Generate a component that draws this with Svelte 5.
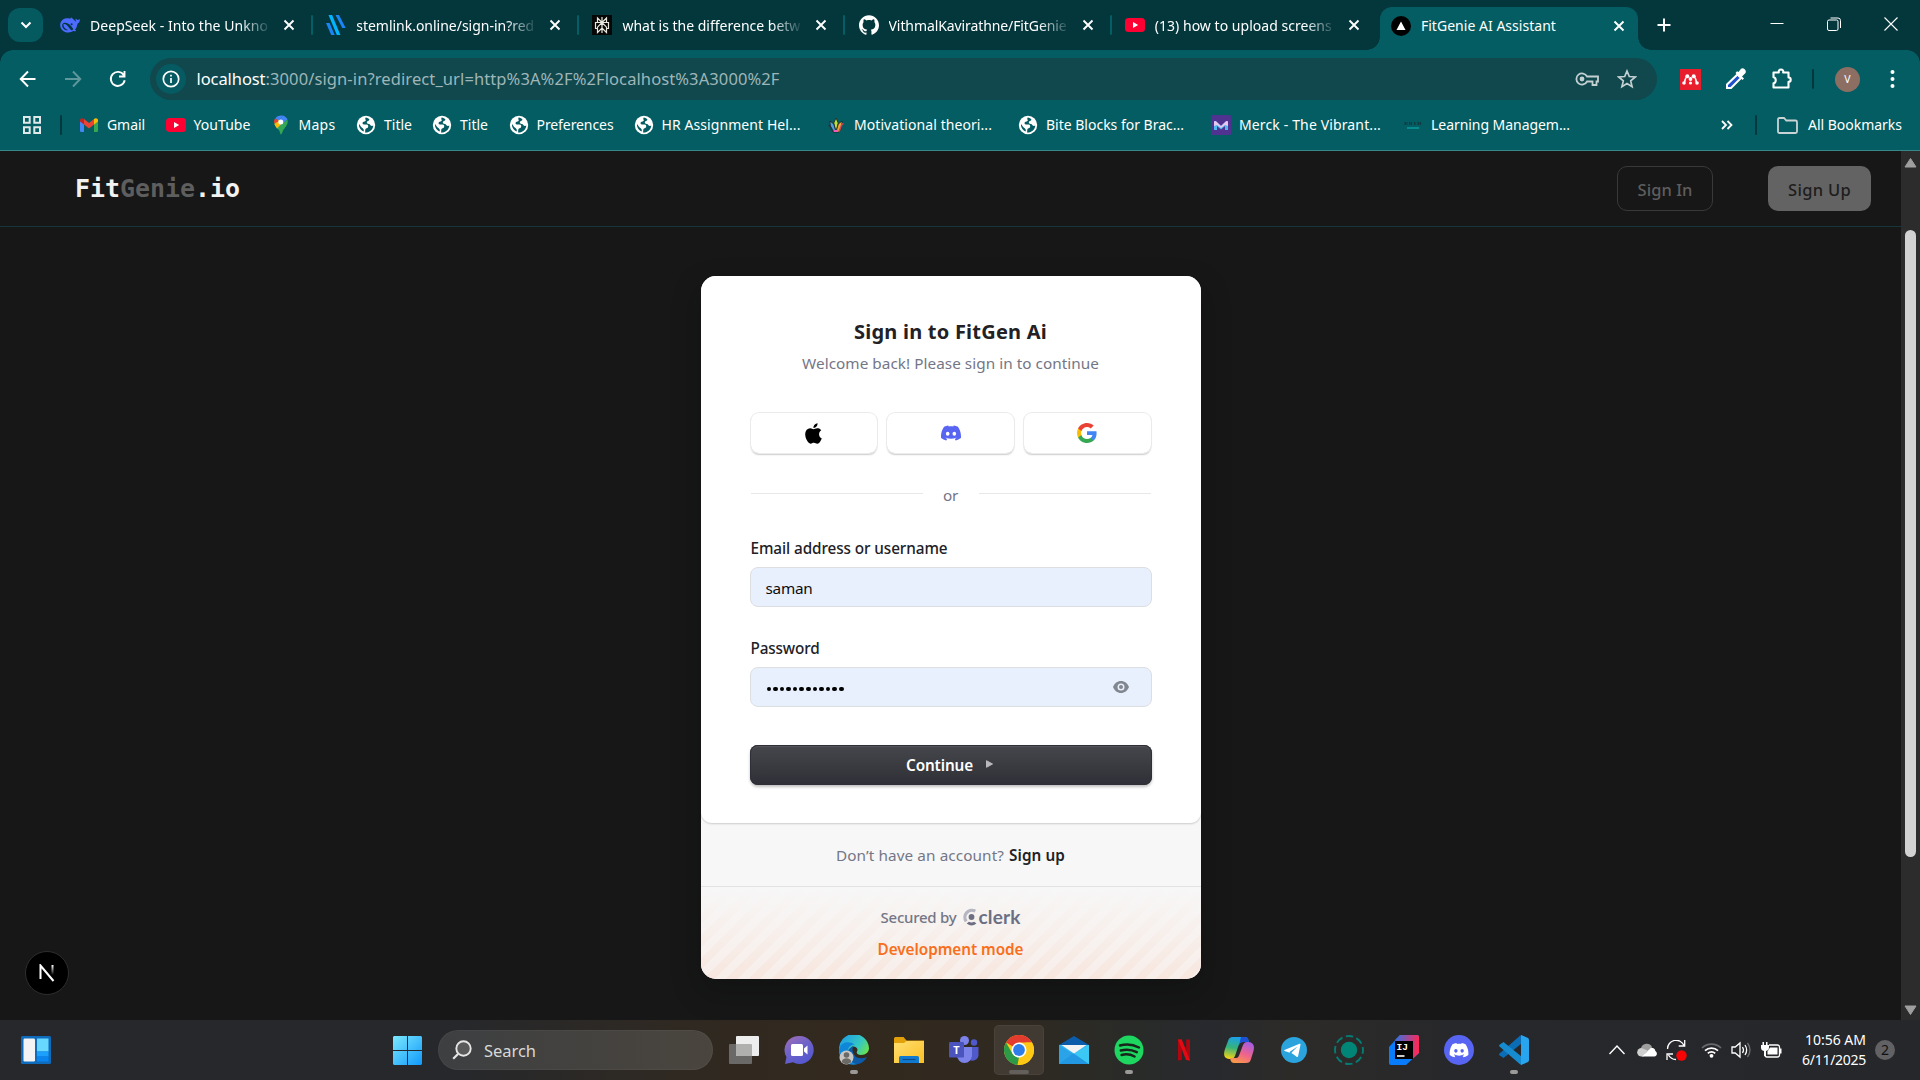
<script>
  // Spreads the letters of a label so that it takes the given width.
  function fit(node, width) {
    const natural = node.getBoundingClientRect().width;
    const count = [...node.textContent].length;
    node.style.letterSpacing = `${(width - natural) / count}px`;
  }

  const tabs = [
    { icon: 'whale', title: 'DeepSeek - Into the Unkno', w: 178 },
    { icon: 'stem', title: 'stemlink.online/sign-in?red', w: 178 },
    { icon: 'perplexity', title: 'what is the difference betw', w: 178 },
    { icon: 'github', title: 'VithmalKavirathne/FitGenie', w: 178 },
    { icon: 'youtube', title: '(13) how to upload screens', w: 177 },
  ];

  const bookmarks = [
    { icon: 'gmail', title: 'Gmail', w: 38, before: 15 },
    { icon: 'youtube', title: 'YouTube', w: 57, before: 20.5 },
    { icon: 'maps', title: 'Maps', w: 37, before: 20 },
    { icon: 'globe', title: 'Title', w: 28, before: 20.5 },
    { icon: 'globe', title: 'Title', w: 28, before: 20 },
    { icon: 'globe', title: 'Preferences', w: 77, before: 20.5 },
    { icon: 'globe', title: 'HR Assignment Hel...', w: 139, before: 20 },
    { icon: 'lily', title: 'Motivational theori...', w: 138, before: 25.5 },
    { icon: 'globe', title: 'Bite Blocks for Brac...', w: 138, before: 26 },
    { icon: 'merck', title: 'Merck - The Vibrant...', w: 142, before: 27 },
    { icon: 'apiit', title: 'Learning Managem...', w: 139, before: 22 },
  ];

  const apps = [
    { icon: 'chat' },
    { icon: 'edge', mark: true },
    { icon: 'explorer' },
    { icon: 'teams' },
    { icon: 'chrome', active: true },
    { icon: 'mail' },
    { icon: 'spotify', mark: true },
    { icon: 'netflix' },
    { icon: 'copilot' },
    { icon: 'telegram' },
    { icon: 'ring' },
    { icon: 'idea' },
    { icon: 'discordround' },
    { icon: 'vscode', mark: true },
  ];

  const discordPath =
    'M20.317 4.3698a19.7913 19.7913 0 00-4.8851-1.5152.0741.0741 0 00-.0785.0371c-.211.3753-.4447.8648-.6083 1.2495-1.8447-.2762-3.68-.2762-5.4868 0-.1636-.3933-.4058-.8742-.6177-1.2495a.077.077 0 00-.0785-.037 19.7363 19.7363 0 00-4.8852 1.515.0699.0699 0 00-.0321.0277C.5334 9.0458-.319 13.5799.0992 18.0578a.0824.0824 0 00.0312.0561c2.0528 1.5076 4.0413 2.4228 5.9929 3.0294a.0777.0777 0 00.0842-.0276c.4616-.6304.8731-1.2952 1.226-1.9942a.076.076 0 00-.0416-.1057c-.6528-.2476-1.2743-.5495-1.8722-.8923a.077.077 0 01-.0076-.1277c.1258-.0943.2517-.1923.3718-.2914a.0743.0743 0 01.0776-.0105c3.9278 1.7933 8.18 1.7933 12.0614 0a.0739.0739 0 01.0785.0095c.1202.099.246.1981.3728.2924a.077.077 0 01-.0066.1276 12.2986 12.2986 0 01-1.873.8914.0766.0766 0 00-.0407.1067c.3604.698.7719 1.3628 1.225 1.9932a.076.076 0 00.0842.0286c1.961-.6067 3.9495-1.5219 6.0023-3.0294a.077.077 0 00.0313-.0552c.5004-5.177-.8382-9.6739-3.5485-13.6604a.061.061 0 00-.0312-.0286zM8.02 15.3312c-1.1825 0-2.1569-1.0857-2.1569-2.419 0-1.3332.9555-2.4189 2.157-2.4189 1.2108 0 2.1757 1.0952 2.1568 2.419 0 1.3332-.9555 2.4189-2.1569 2.4189zm7.9748 0c-1.1825 0-2.1569-1.0857-2.1569-2.419 0-1.3332.9554-2.4189 2.1569-2.4189 1.2108 0 2.1757 1.0952 2.1568 2.419 0 1.3332-.946 2.4189-2.1568 2.4189Z';
</script>

{#snippet fav(name)}
  <svg class="fav" viewBox="0 0 20 20" width="20" height="20" fill="none">
    {#if name === 'whale'}
      <path fill="#4d6bfe" d="M19.8 4.2c-.9-.3-1.3.6-2 .9-1-.4-1.500-1.500-2.200-1.300-.2 1 .3 2.400 1 3.200-1.600-.6-2.500-2.500-4-3.500-.9-.5-1-1.100-1.800-1.100.2.700-.4 1.200-1.300 1.200C4.800 2.200.5 5 .2 9.500c-.3 5 4 8 8 8 2 0 4-.6 5-1.400 1 .2 2.500.3 2.800-.2.300-.5-.8-.9-1-1.200 1.600-2 2.200-4 2.400-6 1.800-.6 2.600-2.600 2.400-4.500zM12 15.500C9.500 14.500 8 9.300 4.200 8.900c-.9 0-1 .8-.7 1.600.6 2.400 2.600 4.500 5 4.400-3 1.500-6.700-1.800-6.300-5.200 1-3.500 6.500-2 8.800 1.200l2.300 3.200z" />
      <circle cx="11.600" cy="9.200" r="1" fill="#03373c" />
    {:else if name === 'stem'}
      <path d="M2.500 0h3.600l8.300 20h-3.600z" fill="#00b4ff" />
      <path d="M9.500 0H13l6.700 13h-3.400zM0 8h3.600l5.100 12H5.200z" fill="#1a86f5" />
    {:else if name === 'perplexity'}
      <rect width="20" height="20" fill="#070707" />
      <path d="M10 2v16M10 7.500 5.500 3v4.500zM10 7.500 14.500 3v4.500zM3.500 7.500h13v6h-2v4L10 13l-4.500 4.500v-4h-2zM10 7.500l-4.500 4.700v1.500M10 7.500l4.500 4.700v1.500" stroke="#e8e6dd" stroke-width="1.200" />
    {:else if name === 'github'}
      <g transform="scale(.833)"><path fill="#fff" d="M12 .297c-6.630 0-12 5.373-12 12 0 5.303 3.438 9.800 8.205 11.385.6.113.82-.258.82-.577 0-.285-.01-1.040-.015-2.040-3.338.724-4.042-1.610-4.042-1.610C4.422 18.070 3.633 17.700 3.633 17.700c-1.087-.744.084-.729.084-.729 1.205.084 1.838 1.236 1.838 1.236 1.070 1.835 2.809 1.305 3.495.998.108-.776.417-1.305.76-1.605-2.665-.3-5.466-1.332-5.466-5.930 0-1.310.465-2.380 1.235-3.220-.135-.303-.54-1.523.105-3.176 0 0 1.005-.322 3.300 1.230.96-.267 1.980-.399 3-.405 1.020.006 2.040.138 3 .405 2.280-1.552 3.285-1.230 3.285-1.230.645 1.653.24 2.873.12 3.176.765.840 1.230 1.910 1.230 3.220 0 4.610-2.805 5.625-5.475 5.920.42.360.81 1.096.81 2.220 0 1.606-.015 2.896-.015 3.286 0 .315.21.690.825.570C20.565 22.092 24 17.592 24 12.297c0-6.627-5.373-12-12-12" /></g>
    {:else if name === 'youtube'}
      <rect y="3" width="20" height="14" rx="3.500" fill="#ff0033" />
      <path d="M8 7v6l5.200-3z" fill="#fff" />
    {:else if name === 'next'}
      <circle cx="10" cy="10" r="10" fill="#000" />
      <path d="M10 5.500 14.500 14h-9z" fill="#fff" />
    {:else if name === 'gmail'}
      <path d="M1 17V5l4 3v9H2.200Q1 17 1 16z" fill="#4285f4" />
      <path d="M15 17V8l4-3v11q0 1-1.200 1z" fill="#34a853" />
      <path d="M5 9.500V4l5 4 5-4v5.500l-5 4z" fill="#ea4335" />
      <path d="M1 5.500C1 3 3.500 2.600 5 4v5.500L1 6.600z" fill="#c5221f" />
      <path d="M19 5.500C19 3 16.500 2.600 15 4v5.500l4-2.900z" fill="#fbbc04" />
    {:else if name === 'maps'}
      <path d="M10 19.500c-.8 0-.8-3-2.300-5.100C5.500 11.500 3 9.800 3 7h5l5.500 6c-1.800 2.400-2.500 6.500-3.500 6.500z" fill="#34a853" />
      <path d="M12 .6c2.300.8 3.700 2.200 4.400 4L6 13.500 3.900 10.500z" fill="#4285f4" />
      <path d="M4.300 3.200C6.500.3 10 .1 12 .7L7.500 6z" fill="#4285f4" />
      <path d="m6 13.500 10.400-9c1.200 4-1 6.400-3.400 9.400l-4 1.500z" fill="#34a853" />
      <path d="M3.400 9.200 7.500 4.700l2.500 4.500L6 13.500z" fill="#fbbc04" />
      <path d="M3.300 8.500C2.600 6.500 3.200 4.500 4.300 3.200L8 6.300z" fill="#ea4335" />
      <circle cx="9.800" cy="7" r="2.500" fill="#fff" />
    {:else if name === 'globe'}
      <circle cx="10" cy="10" r="9.200" fill="#fff" />
      <path d="M9.800 2.500c-1.500 1.800.7 2.300-.3 3.600-1 1-3 .5-3 2.200 0 1.500 2 1.200 4 1.300 1.900.2 2 1.500 1.500 2.700-.6 1.300-2 .6-2.600 2-.4 1.300 0 2.400-.4 3.300 4.600.3 8-3 8.300-7-1.300.7-2.400.3-3.200-.9-1-1.400-3.300-.6-3.300-2.300 0-1.500 2.300-1.200 2.700-2.700-.8-1.300-2.200-2-3.700-2.200zM3 9c-.3 3.300 1.800 6.400 4.700 7.600.4-2-.2-3-1.600-3.800C4.600 12 4.300 10 3 9z" fill="#045b61" />
    {:else if name === 'lily'}
      <path d="m10 3 2.200 5L10 17 7.800 8z" fill="#b8e33a" stroke="#222" stroke-width=".8" />
      <path d="m4 6 3.700 3L10 17H7C4.500 14 4 10 4 6z" fill="#4d9de0" stroke="#222" stroke-width=".8" />
      <path d="m16 6-3.700 3L10 17h3c2.500-3 3-7 3-11z" fill="#f2a33c" stroke="#222" stroke-width=".8" />
      <path d="M2.500 10.500c2 0 3 2.500 4.500 6" stroke="#27343a" stroke-width="1.500" />
      <path d="M17.500 8.500c-2 0-3 4-4.500 8" stroke="#d9475b" stroke-width="1.500" />
      <path d="M8 16h4" stroke="#ee5cc0" stroke-width="2" />
    {:else if name === 'merck'}
      <rect width="20" height="20" rx="1.500" fill="#503291" />
      <path d="M3 15V7.500q0-2 2-1.200L10 11l5-4.700q2-.8 2 1.200V15h-3v-4l-4 3.500L6 11v4z" fill="#4fb8ef" />
      <path d="M3 11V7.500q0-2 2-1.200L10 11l5-4.700q2-.8 2 1.200V11l-3-1-4 3-4-3z" fill="#e8c6ee" />
    {:else if name === 'apiit'}
      <path d="M1.500 8.500h3M6 8.500h3M11 8.500h2M14.500 8.500h4" stroke="#113d42" stroke-width="3" stroke-dasharray="1.500 .6" />
      <path d="M4 13h12" stroke="#078b8d" stroke-width="2" />
    {/if}
  </svg>
{/snippet}

{#snippet cross()}
  <svg width="12" height="12" viewBox="0 0 12 12"><path d="m1.500 1.500 9 9m0-9-9 9" stroke="#fff" stroke-width="1.900" /></svg>
{/snippet}

{#snippet app(name)}
  <svg viewBox="0 0 30 30" width="30" height="30" fill="none">
    {#if name === 'chat'}
      <path d="M15.500 1A14 14 0 1 1 9 27.300L1 29l1.500-7A14 14 0 0 1 15.500 1z" fill="url(#gChat)" />
      <rect x="7" y="9" width="12" height="12" rx="1.500" fill="#fff" />
      <path d="m20 13.500 3.500-3v9l-3.500-3z" fill="#fff" />
    {:else if name === 'edge'}
      <path d="M0 15A15 15 0 0 1 30 13c0 4-3 7-8 7-3 0-5-1.500-4-3.500 1.500-3-1-5.500-5-5L5 26A15 15 0 0 1 0 15z" fill="url(#gEdge)" />
      <path d="M0 15c1-8 10-10 15.500-5.500C10 10 8 14 9 18c1 6 5 9.500 10 11C10 32 0 26 0 15z" fill="#0f87d8" />
      <path d="M14 11.800C9 13 7.500 18 9.500 22.500c2 4.500 6 7 10 6.500 4-1 7-4 8.500-7-5 2.500-11 1.500-13-2.500-1.500-3-2-5-1-7.700z" fill="#0d5ba9" />
      <circle cx="7.500" cy="22.500" r="7" fill="#c8c6c4" />
      <circle cx="7.500" cy="20" r="2.800" fill="#6b6966" />
      <path d="M2.800 27c0-5 9.400-5 9.400 0-2.500 2.700-7 2.700-9.400 0z" fill="#6b6966" />
    {:else if name === 'explorer'}
      <path d="M0 3.500Q0 2 1.500 2h8l3 3.500H30V16H0z" fill="#e2a00b" />
      <path d="M0 8h10l2.500-2H30v21.500q0 .5-.5.5H.5q-.5 0-.5-.5z" fill="url(#gFold)" />
      <path d="M5 28v-5.500q0-1.500 1.500-1.500h17q1.500 0 1.500 1.500V28z" fill="#0f7ad0" />
      <path d="M8.500 24.500h13" stroke="#0a4c8c" stroke-width="1.200" />
    {:else if name === 'teams'}
      <circle cx="15.500" cy="5.500" r="4.500" fill="#7b83eb" />
      <circle cx="25" cy="7.500" r="3.200" fill="#5059c9" />
      <path d="M20 12h9.500v8a6 6 0 0 1-9.500 4.500z" fill="#5059c9" />
      <path d="M8 12h15v8.500a7.500 7.500 0 0 1-15 0z" fill="#7b83eb" />
      <rect y="7" width="15" height="15.500" rx="1.200" fill="#4b53bc" />
      <text x="7.500" y="19" text-anchor="middle" class="tee">T</text>
    {:else if name === 'chrome'}
      <circle cx="15" cy="15" r="15" fill="#ffc814" />
      <path d="M15 15 2 7.500A15 15 0 0 1 28 7.500H15z" fill="#e33b2e" />
      <path d="m2 7.500 6.500 11.250L15 22l-1.500 8A15 15 0 0 1 2 7.500z" fill="#2d9a48" />
      <path d="M15 30 21.500 18.700V7.500H28A15 15 0 0 1 15 30z" fill="#ffc814" />
      <circle cx="15" cy="15" r="7.500" fill="#fff" />
      <circle cx="15" cy="15" r="5.900" fill="#2f7de9" />
    {:else if name === 'mail'}
      <path d="M0 10 15 1l15 9z" fill="#0b5cab" />
      <path d="M0 10h30v19H0z" fill="#35b8f1" />
      <path d="m0 10 30 19H0z" fill="#2aa3e8" />
      <path d="m0 29 15-11 15 11z" fill="#1f93e0" opacity=".7" />
      <path d="M30 10v19L15 18.500z" fill="#3cc8f5" />
      <path d="M2.500 10h25L15 18.500z" fill="#f3f3f3" />
    {:else if name === 'spotify'}
      <circle cx="15" cy="15" r="14.500" fill="#1ed760" />
      <path d="M6 10.500q10-2.800 19 2M6.800 15.500q8.500-2.300 16 1.700M7.600 20q7-1.800 13 1.500" stroke="#17251b" stroke-width="2.500" stroke-linecap="round" />
    {:else if name === 'netflix'}
      <path d="M9 4.500h3.800V25L9 25.500zM17.200 4.500H21v21l-3.800-.5z" fill="#b1060f" />
      <path d="M9 4.500h3.800L21 25.500l-4-.6z" fill="#e50914" />
    {:else if name === 'copilot'}
      <path d="M9 2h12c3 0 3.500 3 4 5h-6c-3 0-4 2-5 5l-3 9c-1 2-2 3-4 3-7 0-8-4-6-10l3-8c1-3 2-4 5-4z" fill="url(#gCopA)" />
      <path d="M22 28H10c-3 0-3.500-3-4-5h6c2 0 3-2 4-5l3-8c1-2 2-3 4-3 6 0 8 3 6.500 9l-2.500 8c-1 3-2 4-5 4z" fill="url(#gCopB)" />
      <path d="M17 2h4c3 0 3.500 3 4 5h-6c-2 0-3 1-4 3z" fill="#1d4fd7" />
    {:else if name === 'telegram'}
      <circle cx="15" cy="15" r="13" fill="#2ba3dd" />
      <path d="M5.500 15 20.500 8.700q1.200-.3 1 1l-2.400 11.500q-.4 1.200-1.500.5l-4-3-5-1.800-3-1q-1-.4-.1-.9z" fill="#fff" />
      <path d="m10.500 17 8-5.500-5.800 6-.4 3.500z" fill="#2ba3dd" />
    {:else if name === 'ring'}
      <circle cx="15" cy="15" r="8.200" fill="#008577" />
      <circle cx="15" cy="15" r="14" stroke="#047c74" stroke-width="1.900" stroke-dasharray="7.500 3.500" stroke-dashoffset="3.750" />
    {:else if name === 'idea'}
      <path d="M11 0h17q2 0 2 2v16L17 30H2q-2 0-2-2V12z" fill="#087cfa" />
      <path d="M11 0h17q2 0 2 2v16l-6 5.500L6 5z" fill="url(#gIdea)" />
      <rect x="6" y="6" width="18" height="18" fill="#000" />
      <text x="7.500" y="15" class="ij">IJ</text>
      <path d="M8 21h7.500" stroke="#fff" stroke-width="1.600" />
    {:else if name === 'discordround'}
      <circle cx="15" cy="15" r="15" fill="#5865f2" />
      <g transform="translate(5.600 5.700) scale(.785)"><path d={discordPath} fill="#fff" /></g>
    {:else if name === 'vscode'}
      <path d="M22.500 0v8.500L4.500 23 .5 20.200q-.8-.8 0-1.600L21 .8z" fill="#0b6db5" />
      <path d="M.5 9.800 4.500 7l18 14.500V30L21 29.200.5 11.400q-.8-.8 0-1.600z" fill="#168bd0" />
      <path d="m22 0 6.500 2.700Q30 3.300 30 5v20q0 1.700-1.500 2.300L22 30z" fill="#29a4ee" />
    {/if}
  </svg>
{/snippet}

<svg class="defs" width="0" height="0">
  <defs>
    <linearGradient id="gChat" x1="0" y1="0" x2=".6" y2="1"><stop stop-color="#a56db5" /><stop offset=".5" stop-color="#6f63c8" /><stop offset="1" stop-color="#5558cf" /></linearGradient>
    <linearGradient id="gEdge" x1="0" y1="0" x2="1" y2=".6"><stop offset=".2" stop-color="#21a6df" /><stop offset=".65" stop-color="#35c7c4" /><stop offset="1" stop-color="#6be34b" /></linearGradient>
    <linearGradient id="gFold" x1="0" y1="0" x2="1" y2="1"><stop stop-color="#ffdf70" /><stop offset="1" stop-color="#fbbf24" /></linearGradient>
    <linearGradient id="gCopA" x1=".5" y1="0" x2=".3" y2="1"><stop stop-color="#1aa0ea" /><stop offset=".5" stop-color="#36b37a" /><stop offset="1" stop-color="#f5d414" /></linearGradient>
    <linearGradient id="gCopB" x1=".8" y1="0" x2=".3" y2="1"><stop stop-color="#a25be8" /><stop offset=".55" stop-color="#f0648a" /><stop offset="1" stop-color="#f9984a" /></linearGradient>
    <linearGradient id="gIdea" x1="0" y1="0" x2="1" y2=".1"><stop stop-color="#2f74e8" /><stop offset="1" stop-color="#fe2857" /></linearGradient>
    <linearGradient id="gN" x1="0" y1="0" x2="0" y2="1"><stop stop-color="#fff" /><stop offset="1" stop-color="#fff" stop-opacity="0" /></linearGradient>
    <linearGradient id="gWin" x1="0" y1="0" x2="1" y2="1"><stop stop-color="#7be9fd" /><stop offset="1" stop-color="#1199fb" /></linearGradient>
  </defs>
</svg>

<div class="screen">
  <header class="tabstrip">
    <div class="tabsearch">
      <svg width="12" height="8" viewBox="0 0 12 8"><path d="m1.500 1.500 4.500 4.500 4.500-4.500" stroke="#fff" stroke-width="2" fill="none" /></svg>
    </div>
    {#each tabs as t, i}
      <div class="tab">
        {@render fav(t.icon)}
        <div class="tabtitle"><span use:fit={t.w}>{t.title}</span></div>
        <div class="x">{@render cross()}</div>
        <div class="sep" class:hidden={i === tabs.length - 1}></div>
      </div>
    {/each}
    <div class="tab active">
      {@render fav('next')}
      <div class="tabtitle whole"><span use:fit={135}>FitGenie AI Assistant</span></div>
      <div class="x">{@render cross()}</div>
    </div>
    <svg class="plus" width="14" height="14" viewBox="0 0 14 14"><path d="M7 .5v13M.5 7h13" stroke="#fff" stroke-width="2" /></svg>
    <div class="wincontrols">
      <svg width="14" height="14" viewBox="0 0 14 14"><path d="M.5 6.500h13" stroke="#fff" /></svg>
      <svg width="14" height="14" viewBox="0 0 14 14" fill="none" stroke="#fff"><rect x=".5" y="3" width="10.500" height="10.500" rx="1.500" /><path d="M3.500 1h7.500q2.500 0 2.500 2.500V11" /></svg>
      <svg width="14" height="14" viewBox="0 0 14 14"><path d="m.5.5 13 13m0-13-13 13" stroke="#fff" stroke-width="1.100" /></svg>
    </div>
  </header>

  <div class="chrome">
    <div class="toolbar">
      <svg width="18" height="18" viewBox="0 0 18 18" fill="none" stroke="#fff" stroke-width="1.900"><path d="M16.500 9H2M9 1.500 1.700 9 9 16.500" /></svg>
      <svg class="fwd" width="18" height="18" viewBox="0 0 18 18" fill="none" stroke="#5d989c" stroke-width="1.900"><path d="M1 9h15M9 1.500 16.300 9 9 16.500" /></svg>
      <svg class="reload" width="18" height="18" viewBox="0 0 18 18" fill="none" stroke="#fff" stroke-width="1.900"><path d="M14.800 5.200A7 7 0 1 0 15.700 10.300M15.500 1v5.500H10" /></svg>
      <div class="omnibox">
        <div class="info">
          <svg width="18" height="18" viewBox="0 0 18 18" fill="none" stroke="#fff" stroke-width="1.700"><circle cx="9" cy="9" r="7.700" /><path d="M9 8v5M9 4.700v1.800" /></svg>
        </div>
        <div class="url"><span class="host" use:fit={69}>localhost</span><span class="rest" use:fit={514}>:3000/sign-in?redirect_url=http%3A%2F%2Flocalhost%3A3000%2F</span></div>
        <svg class="key" width="24" height="18" viewBox="0 0 24 18" fill="none" stroke="#c3d0d2" stroke-width="1.800"><path d="M12 6.500h11v5h-1.500V15h-4v-3.500H12a5.600 5.600 0 1 1 0-5z" /><circle cx="7" cy="9" r="2.400" fill="#c3d0d2" stroke="none" /></svg>
        <svg class="star" width="20" height="20" viewBox="0 0 20 20"><path d="m10 2 2.300 5.500 6 .5-4.600 3.900 1.400 5.800L10 14.600l-5.100 3.100 1.400-5.800L1.700 8l6-.5z" fill="none" stroke="#c3d0d2" stroke-width="1.700" /></svg>
      </div>
      <div class="exts">
        <svg width="21" height="21" viewBox="0 0 21 21"><path d="M0 0h21v21H0z" fill="#e91e2c" /><g fill="#fff"><circle cx="7.300" cy="7.300" r="2" /><circle cx="13.700" cy="7.300" r="2" /><circle cx="10.500" cy="10" r="1.900" /><circle cx="4" cy="14" r="1.800" /><circle cx="10.500" cy="14" r="1.600" /><circle cx="17" cy="14" r="1.800" /></g><path d="M6 8.500q-1 2-1.300 4.500M15 8.500q1 2 1.300 4.500" fill="none" stroke="#fff" stroke-width="1.600" /></svg>
        <svg class="pen" width="22" height="22" viewBox="0 0 22 22"><path d="m12.500 6.500 3.500 3.500L6 20H2v-3.500z" fill="#1e4fd0" stroke="#fff" stroke-width="2" /><path d="m10.500 5 7 7 1.500-1.500-2-2 3.500-3.500q1-2-.8-3.700T16 .8L13.500 4l-1.500-.8z" fill="#fff" /></svg>
        <svg class="puzzle" width="22" height="22" viewBox="0 0 22 22"><path d="M2.500 4.500h5.300a2.300 2.300 0 1 1 4.400 0h5.300v5a2.200 2.200 0 1 1 0 4.400v5.600h-15v-4.300c3-.4 3-5.600 0-6z" fill="none" stroke="#fff" stroke-width="2.100" stroke-linejoin="round" /></svg>
        <div class="vsep"></div>
        <div class="avatar">V</div>
        <svg class="dotmenu" width="5" height="20" viewBox="0 0 5 20" fill="#fff"><circle cx="2.500" cy="3" r="2" /><circle cx="2.500" cy="10" r="2" /><circle cx="2.500" cy="17" r="2" /></svg>
      </div>
    </div>
    <div class="bookmarks">
      <svg width="18" height="18" viewBox="0 0 18 18" fill="none" stroke="#dfe9ea" stroke-width="2"><path d="M1 1h5.700v5.700H1zM11.300 1H17v5.700h-5.700zM1 11.300h5.700V17H1zM11.300 11.300H17V17h-5.700z" /></svg>
      <div class="vsep"></div>
      {#each bookmarks as b}
        <div class="bm" style:margin-left="{b.before}px">
          {@render fav(b.icon)}<span use:fit={b.w}>{b.title}</span>
        </div>
      {/each}
      <div class="bmend">
        <svg width="12" height="10" viewBox="0 0 12 10" fill="none" stroke="#fff" stroke-width="1.800"><path d="m1 1 4 4-4 4M6.500 1l4 4-4 4" /></svg>
        <div class="vsep"></div>
        <svg class="folder" width="21" height="17" viewBox="0 0 21 17" fill="none" stroke="#c9d3d5" stroke-width="1.800"><path d="M1 14.500v-12Q1 1 2.500 1H7l2.300 2.500H18.500Q20 3.500 20 5v9.500q0 1.500-1.500 1.500h-16Q1 16 1 14.500z" /></svg>
        <span use:fit={94}>All Bookmarks</span>
      </div>
    </div>
  </div>

  <main class="page">
    <div class="content">
      <nav>
        <div class="brand"><span>Fit</span><span class="dim">Genie</span><span>.io</span></div>
        <div class="btn outline"><span use:fit={55}>Sign In</span></div>
        <div class="btn solid"><span use:fit={63}>Sign Up</span></div>
      </nav>
      <div class="stage">
        <section class="card">
          <div class="body">
            <h1><span use:fit={193}>Sign in to FitGen Ai</span></h1>
            <p class="sub"><span use:fit={297}>Welcome back! Please sign in to continue</span></p>
            <div class="social">
              <div><svg width="17" height="21" viewBox="2 0 20 24"><path d="M12.152 6.896c-.948 0-2.415-1.078-3.960-1.040-2.040.027-3.910 1.183-4.961 3.014-2.117 3.675-.546 9.103 1.519 12.090 1.013 1.454 2.208 3.090 3.792 3.039 1.520-.065 2.090-.987 3.935-.987 1.831 0 2.350.987 3.960.948 1.637-.026 2.676-1.480 3.676-2.948 1.156-1.688 1.636-3.325 1.662-3.415-.039-.013-3.182-1.221-3.220-4.857-.026-3.040 2.480-4.494 2.597-4.559-1.429-2.090-3.623-2.324-4.390-2.376-2-.156-3.675 1.090-4.610 1.090zM15.530 3.830c.843-1.012 1.400-2.427 1.245-3.830-1.207.052-2.662.805-3.532 1.818-.780.896-1.454 2.338-1.273 3.714 1.338.104 2.715-.688 3.559-1.701" /></svg></div>
              <div><svg width="20" height="20" viewBox="0 0 24 24"><path d={discordPath} fill="#5865f2" /></svg></div>
              <div><svg width="20" height="20" viewBox="1 1 22 22"><path fill="#4285f4" d="M22.560 12.250c0-.780-.070-1.530-.200-2.250H12v4.260h5.920c-.26 1.370-1.040 2.530-2.210 3.310v2.770h3.570c2.080-1.920 3.280-4.740 3.280-8.090z" /><path fill="#34a853" d="M12 23c2.970 0 5.460-.980 7.280-2.660l-3.570-2.770c-.98.660-2.230 1.060-3.710 1.060-2.860 0-5.290-1.930-6.160-4.530H2.180v2.840C3.990 20.530 7.700 23 12 23z" /><path fill="#fbbc05" d="M5.840 14.090c-.22-.66-.35-1.360-.35-2.090s.13-1.430.35-2.090V7.070H2.180C1.430 8.550 1 10.220 1 12s.43 3.450 1.180 4.930l3.660-2.840z" /><path fill="#ea4335" d="M12 5.380c1.620 0 3.060.56 4.210 1.640l3.150-3.150C17.450 2.090 14.970 1 12 1 7.700 1 3.990 3.470 2.180 7.070l3.660 2.840c.87-2.600 3.300-4.530 6.160-4.530z" /></svg></div>
            </div>
            <div class="or"><i></i><span use:fit={15}>or</span><i></i></div>
            <div class="label"><span use:fit={197}>Email address or username</span></div>
            <div class="field"><span use:fit={47}>saman</span></div>
            <div class="label second"><span use:fit={69}>Password</span></div>
            <div class="field">
              <div class="dots">{#each Array(12) as _}<b></b>{/each}</div>
              <svg class="eye" width="16" height="12" viewBox="0 0 16 12"><path fill-rule="evenodd" d="M8 0c3.600 0 6.500 2.300 8 6-1.500 3.700-4.400 6-8 6S1.500 9.700 0 6c1.500-3.700 4.400-6 8-6zm0 2.500a3.500 3.500 0 1 0 0 7 3.500 3.500 0 0 0 0-7z" fill="#82868f" /><circle cx="8" cy="6" r="2" fill="#82868f" /></svg>
            </div>
            <div class="continue"><span use:fit={67}>Continue</span><svg width="7" height="8" viewBox="0 0 7 8"><path d="M.5.700v6.600L6.500 4z" fill="#b9b9bd" stroke="#b9b9bd" stroke-linejoin="round" /></svg></div>
          </div>
          <div class="signup"><span use:fit={168}>Don’t have an account?</span><strong use:fit={56}>Sign up</strong></div>
          <div class="secured">
            <div class="by">
              <span use:fit={76}>Secured by</span>
              <svg width="15" height="18" viewBox="0 0 15 18"><path d="M12.300 3.200A7 7 0 0 0 3.200 13.400" fill="none" stroke="#b5b6c1" stroke-width="3.200" /><circle cx="8.500" cy="9" r="2.900" fill="#6c6f84" /><path d="M3.700 15.600 5.900 13.800q2.700 1.400 5.300 0l2.200 1.800q-4.800 4-9.700 0z" fill="#6c6f84" /></svg>
              <em use:fit={42}>clerk</em>
            </div>
            <div class="dev"><span use:fit={146}>Development mode</span></div>
          </div>
        </section>
      </div>
      <div class="nextbadge">
        <svg width="16" height="18" viewBox="0 0 16 18" fill="none"><path d="M1.500 15V1.500L14.500 17" stroke="#fff" stroke-width="2" /><rect x="12.500" y="1" width="2" height="10" fill="url(#gN)" /></svg>
      </div>
    </div>
    <div class="scrollbar">
      <svg width="13" height="11" viewBox="0 0 13 11"><path d="M6.500 1.500 12 10H1z" fill="#9f9f9f" stroke="#9f9f9f" stroke-linejoin="round" /></svg>
      <div class="thumb"></div>
      <svg class="down" width="13" height="11" viewBox="0 0 13 11"><path d="M6.500 9.500 12 1H1z" fill="#9f9f9f" stroke="#9f9f9f" stroke-linejoin="round" /></svg>
    </div>
  </main>

  <footer class="taskbar">
    <svg class="widgets" width="30" height="28" viewBox="0 0 30 28"><rect width="30" height="28" rx="1.500" fill="#0f6cbd" /><rect x="2.500" y="2.500" width="11.500" height="23" rx="1.200" fill="#f3f3f3" /><path d="M16 2.500h11.500v13H16z" fill="#69d8ff" /><path d="M16 15.500h11.500v5H16z" fill="#1ba1fb" /><path d="M16 20.500h11.500v5H16z" fill="#0a84ee" /></svg>
    <svg class="start" width="29" height="29" viewBox="0 0 29 29" fill="url(#gWin)"><path d="M1 0h13v14H0V1zM15 0h13l1 1v13H15zM0 15h14v14H1l-1-1zM15 15h14v13l-1 1H15z" /></svg>
    <div class="search">
      <svg width="20" height="20" viewBox="0 0 20 20" fill="none" stroke="#e6e6e6"><circle cx="11.500" cy="8.500" r="7.200" stroke-width="1.900" fill="#5a5a5a" /><path d="m6 14-4.800 4.800" stroke-width="2.200" /></svg>
      <span use:fit={52}>Search</span>
    </div>
    <svg class="taskview" width="30" height="28" viewBox="0 0 30 28"><rect y="8" width="23" height="20" rx="1" fill="#6a6967" /><rect x="7" width="23" height="20" rx="1" fill="#ededed" /><path d="M7 8h15q1 0 1 1v11H8q-1 0-1-1z" fill="#b0b0af" /></svg>
    {#each apps as a}
      <div class="appcell" class:on={a.active} class:mark={a.mark}>{@render app(a.icon)}</div>
    {/each}
    <div class="tray">
      <svg width="18" height="12" viewBox="0 0 18 12"><path d="m1.500 10 7.500-8 7.500 8" fill="none" stroke="#fff" stroke-width="1.400" /></svg>
      <svg class="cloud" width="20" height="14" viewBox="0 0 20 14"><path d="M4 5a6 6 0 0 1 11-1l-4 6z" fill="#9e9e9e" /><path d="M4.500 13.500a4.300 4.300 0 0 1 0-8.600l6 2.600-4 6z" fill="#cfcfcf" /><path d="M5 13.500 14 4.800c3 0 4.300 1.700 4.300 3.200 2.500 1.500 2 5.500-1 5.500z" fill="#fff" /></svg>
      <svg class="sync" width="21" height="21" viewBox="0 0 21 21" fill="none" stroke="#fff" stroke-width="1.300"><path d="M1.500 9A8.600 8.600 0 0 1 18 5.500M18.700 0v6h-6M1 20v-6h6M2.500 15A8.600 8.600 0 0 0 10 19.500" /><circle cx="15.500" cy="15.500" r="5.200" fill="#f80404" stroke="none" /></svg>
      <svg class="wifi" width="21" height="16" viewBox="0 0 21 16" fill="none" stroke-width="1.700"><path d="M1 6a13.500 13.500 0 0 1 19 0" stroke="#68696c" /><path d="M4 8.700a9.300 9.300 0 0 1 13 0M6.800 11.400a5.300 5.300 0 0 1 7.400 0" stroke="#fff" /><circle cx="10.500" cy="13.800" r="1.900" fill="#fff" /></svg>
      <svg class="vol" width="21" height="18" viewBox="0 0 21 18" fill="none" stroke="#fff" stroke-width="1.300"><path d="M1 6h3.200L9 2v14l-4.800-4H1z" /><path d="M11.500 6q2 3 0 6M14 4q3.300 5 0 10" /><path d="M16.500 2q5 7 0 14" stroke="#6d6e70" /></svg>
      <svg class="bat" width="21" height="17" viewBox="0 0 21 17" fill="none"><path d="M8 3h8.500q2 0 2 2v8q0 2-2 2H6q-2 0-2-2v-3" stroke="#fff" stroke-width="1.300" /><path d="M9 5.500h7.500v7H6.500V9.500z" fill="#fff" /><path d="M19 6.500h1.500v5H19zM0 3h8v2.500q0 3-3 3.500v5H3V9Q0 8.500 0 5.500zM1.500 0H3v3H1.500zM5 0h1.500v3H5z" fill="#fff" /></svg>
      <div class="clock"><span use:fit={61}>10:56 AM</span><span use:fit={64}>6/11/2025</span></div>
      <div class="count">2</div>
    </div>
  </footer>
</div>

<style>
  :global(body) { background: #171717; overflow: hidden; }
  .defs { position: absolute; }
  .screen {
    width: 1920px; height: 1080px; display: flex; flex-direction: column; overflow: hidden;
    background: #171717; font-family: 'Noto Sans', 'Open Sans', sans-serif; font-size: 14px; color: #fff; white-space: nowrap;
  }
  .screen :global(svg) { display: block; flex: none; }
  span, strong, em { display: inline-block; }

  .tabstrip { height: 50px; flex: none; display: flex; background: #03373c; }
  .tabsearch { width: 35px; height: 34px; margin: 8px 4px 0 8px; border-radius: 12px; background: #055a60; display: flex; align-items: center; justify-content: center; }
  .tab { width: 266.200px; box-sizing: border-box; height: 50px; padding-left: 13px; display: flex; align-items: center; flex: none; }
  .tabtitle { width: 178px; margin-left: 10px; padding-top: 1px; line-height: 22px; -webkit-mask-image: linear-gradient(90deg, #000 150px, transparent 182px); mask-image: linear-gradient(90deg, #000 150px, transparent 182px); }
  .whole { width: 186px; -webkit-mask-image: none; mask-image: none; }
  .x { margin-left: 15px; width: 12px; }
  .sep { width: 2px; height: 20px; margin-left: 16px; background: #045e64; border-radius: 1px; }
  .hidden { visibility: hidden; }
  .active { position: relative; width: 258px; height: 43px; margin: 7px 0 0 2px; padding: 0 0 6px 11px; background: #045d62; border-radius: 12px 12px 0 0; }
  .active .x { margin-left: 6px; }
  .active::before, .active::after { content: ''; position: absolute; bottom: 0; width: 13px; height: 13px; }
  .active::before { left: -13px; background: radial-gradient(circle at 0 0, transparent 12.500px, #045d62 13px); }
  .active::after { right: -13px; background: radial-gradient(circle at 100% 0, transparent 12.500px, #045d62 13px); }
  .plus { margin: 18px 0 0 19px; }
  .wincontrols { margin: 17px 22px 0 auto; display: flex; gap: 43px; }

  .chrome { height: 101px; box-sizing: border-box; flex: none; background: linear-gradient(#045d62, #045d62) 0 13px no-repeat, radial-gradient(circle at 13px 13px, #045d62 12.500px, #03373c 13px) 0 0 / 13px 13px no-repeat, radial-gradient(circle at 0 13px, #045d62 12.500px, #03373c 13px) 100% 0 / 13px 13px no-repeat, #045d62; border-bottom: 1px solid #38868a; }
  .toolbar { height: 58px; display: flex; align-items: center; padding: 0 25px 0 19px; }
  .fwd { margin-left: 27px; }
  .reload { margin-left: 27px; }
  .omnibox { margin-left: 23px; width: 1507px; height: 42px; border-radius: 21px; background: #10484e; display: flex; align-items: center; box-sizing: border-box; padding-left: 6px; flex: none; }
  .info { width: 30px; height: 30px; border-radius: 50%; background: #055b61; display: flex; align-items: center; justify-content: center; }
  .url { margin-left: 10.500px; font-size: 16.500px; line-height: 24px; flex: 1; }
  .rest { color: #9fb6b8; }
  .key { margin-right: 18px; }
  .star { margin-right: 20px; }
  .exts { display: flex; align-items: center; flex: 1; margin-left: 23px; }
  .pen { margin-left: 24px; }
  .puzzle { margin: 0 19px 0 24px; }
  .dotmenu { margin-left: 30px; }
  .vsep { width: 2px; height: 20px; background: #03393e; border-radius: 1px; }
  .avatar { width: 25px; height: 25px; margin-left: 21px; border-radius: 50%; background: #8d6e63; font-size: 10.500px; line-height: 25px; text-align: center; }
  .bookmarks { height: 34px; display: flex; align-items: center; padding: 0 18px 0 23px; font-size: 14px; line-height: 20px; }
  .bookmarks > .vsep { margin-left: 19px; margin-right: 2px; }
  .bm { display: flex; align-items: center; gap: 8px; }
  .bmend { margin-left: auto; display: flex; align-items: center; }
  .bmend .vsep { margin: 0 20px 0 22px; }
  .folder { margin-right: 10px; }

  .page { height: 869px; display: flex; flex: none; }
  .content { flex: 1; display: flex; flex-direction: column; position: relative; }
  nav { height: 76px; box-sizing: border-box; border-bottom: 1px solid #17363b; display: flex; align-items: center; padding: 0 30px 0 75px; }
  .brand { flex: 1; padding-top: 1px; font: bold 24.900px/30px 'DejaVu Sans Mono', monospace; color: #f2f2f2; }
  .dim { color: #5e5e5e; }
  .btn { height: 45px; box-sizing: border-box; border-radius: 10px; display: flex; align-items: center; justify-content: center; padding-top: 1px; font-size: 16.500px; font-weight: 500; }
  .outline { width: 96px; border: 1px solid #393939; color: #5e5e5e; }
  .solid { width: 103px; margin-left: 55px; background: #636363; color: #1d1d1d; }
  .stage { flex: 1; display: flex; justify-content: center; padding-top: 49px; }
  .card { width: 500px; height: 703px; border-radius: 15px; background: #f7f7f7; overflow: hidden; box-shadow: 0 12px 28px rgba(8, 12, 12, .35); display: flex; flex-direction: column; }
  .body { height: 547px; flex: none; box-sizing: border-box; background: #fff; border-radius: 0 0 11px 11px; padding: 41px 49px 0; box-shadow: 0 1px 2px rgba(0, 0, 0, .18); }
  h1 { margin: 0; font-size: 20px; line-height: 30px; font-weight: 700; color: #212126; text-align: center; }
  .sub { margin: 4px 0 0; font-size: 15.300px; line-height: 24px; color: #747686; text-align: center; }
  .social { display: flex; gap: 10px; margin: 38px 1px 0; }
  .social div { flex: 1; height: 40px; border-radius: 8px; display: flex; align-items: center; justify-content: center; box-shadow: 0 0 0 1px #ebebeb, 0 1.500px 1.500px rgba(0, 0, 0, .2); }
  .or { display: flex; align-items: center; justify-content: space-between; margin: 28px 1px 0; line-height: 22px; font-size: 15.300px; color: #747686; }
  .or span { padding-top: 3px; }
  .or i { width: 172px; height: 1px; background: #e8e8e9; }
  .label { margin: 30px 0 0 1px; font-size: 15.300px; line-height: 24px; font-weight: 500; color: #212126; }
  .second { margin-top: 29px; }
  .field { height: 40px; box-sizing: border-box; margin-top: 7px; border: 1px solid #dcdee2; border-radius: 8px; background: #e8f0fe; display: flex; align-items: center; padding: 2px 22px 0 15px; color: #0c0c0e; font-size: 15.300px; }
  .dots { flex: 1; display: flex; gap: 2.100px; margin: 2px 0 0 1px; }
  .dots b { width: 4.500px; height: 4.500px; border-radius: 50%; background: #000; }
  .eye { margin-top: -2px; }
  .continue { height: 40px; margin-top: 37.500px; border-radius: 8px; background: linear-gradient(#46474c, #2f3037); box-shadow: 0 2px 3px rgba(0, 0, 0, .25), inset 0 0 0 1px #2f3037, inset 0 2px 1px #55565b; display: flex; align-items: center; justify-content: center; gap: 13px; padding-right: 2px; font-size: 15.300px; font-weight: 600; }
  .continue svg { margin-top: -1px; }
  .signup { height: 64px; flex: none; box-sizing: border-box; border-bottom: 1px solid #e3e3e4; display: flex; align-items: center; justify-content: center; gap: 5px; font-size: 15.300px; color: #747686; }
  .signup strong { color: #212126; font-weight: 600; }
  .secured { flex: 1; background: linear-gradient(#f7f7f7, rgba(247, 247, 247, .1)), repeating-linear-gradient(-45deg, #f8ede8 0 8px, #f7e5dc 8px 16px); padding-top: 18px; }
  .by { display: flex; justify-content: center; align-items: center; height: 24px; font-size: 15px; font-weight: 500; color: #747686; }
  .by svg { margin: 0 1px 0 6px; }
  em { font: 700 19px/22px 'Lato', sans-serif; color: #6c6f84; }
  .dev { margin-top: 8px; text-align: center; line-height: 24px; font-size: 15.300px; font-weight: 600; color: #f86f1c; }
  .nextbadge { position: absolute; left: 25px; top: 800px; width: 42px; height: 42px; border: 1px solid #2e2e2e; border-radius: 50%; background: #000; display: flex; align-items: center; justify-content: center; }
  .scrollbar { width: 19px; background: #2c2c2c; display: flex; flex-direction: column; align-items: center; padding: 6px 0 4px; box-sizing: border-box; }
  .thumb { width: 11px; height: 627px; margin-top: 62px; border-radius: 6px; background: #d2d2d2; }
  .down { margin-top: auto; }

  .taskbar { height: 60px; flex: none; display: flex; align-items: center; padding-left: 21px; background: linear-gradient(90deg, #26282c 0, #26282c 440px, #302921 700px, #33291e 850px, #30291f 980px, #292b29 1140px, #27292e 1210px, #2d2b28 1290px, #27282b 1450px, #26272b 100%); }
  .start { margin-left: 342px; }
  .search { width: 275px; height: 40px; box-sizing: border-box; margin-left: 16px; border-radius: 20px; background: linear-gradient(90deg, #3d3f41, #4a453e); box-shadow: inset 0 0 0 1px rgba(255, 255, 255, .04); display: flex; align-items: center; padding-left: 14px; gap: 12px; font-size: 16.500px; color: #d8d8d8; }
  .taskview { margin-left: 16px; margin-right: 14.500px; }
  .appcell { position: relative; width: 50px; height: 50px; margin-right: 5px; border-radius: 5px; display: flex; align-items: center; justify-content: center; flex: none; }
  .on { background: #403a33; box-shadow: inset 0 0 0 1px #48423b; }
  .on::after, .mark::after { content: ''; position: absolute; bottom: 1px; width: 8px; height: 4px; border-radius: 2px; background: #9b9a98; }
  .on::after { width: 20px; background: #63605c; }
  .tee { font: bold 11px 'Open Sans', sans-serif; fill: #fff; }
  .ij { font: bold 9.500px 'Liberation Mono', monospace; fill: #fff; }
  .tray { margin-left: auto; margin-right: 25px; display: flex; align-items: center; }
  .cloud { margin-left: 11px; }
  .sync { margin-left: 9px; }
  .wifi { margin-left: 14px; }
  .vol { margin-left: 9px; }
  .bat { margin-left: 9px; margin-right: 19px; }
  .clock { width: 65px; display: flex; flex-direction: column; align-items: flex-end; font-size: 14px; line-height: 20px; }
  .count { width: 20px; height: 20px; margin-left: 9px; border-radius: 50%; background: #626265; color: #111; font-size: 14px; line-height: 20px; text-align: center; }
</style>
